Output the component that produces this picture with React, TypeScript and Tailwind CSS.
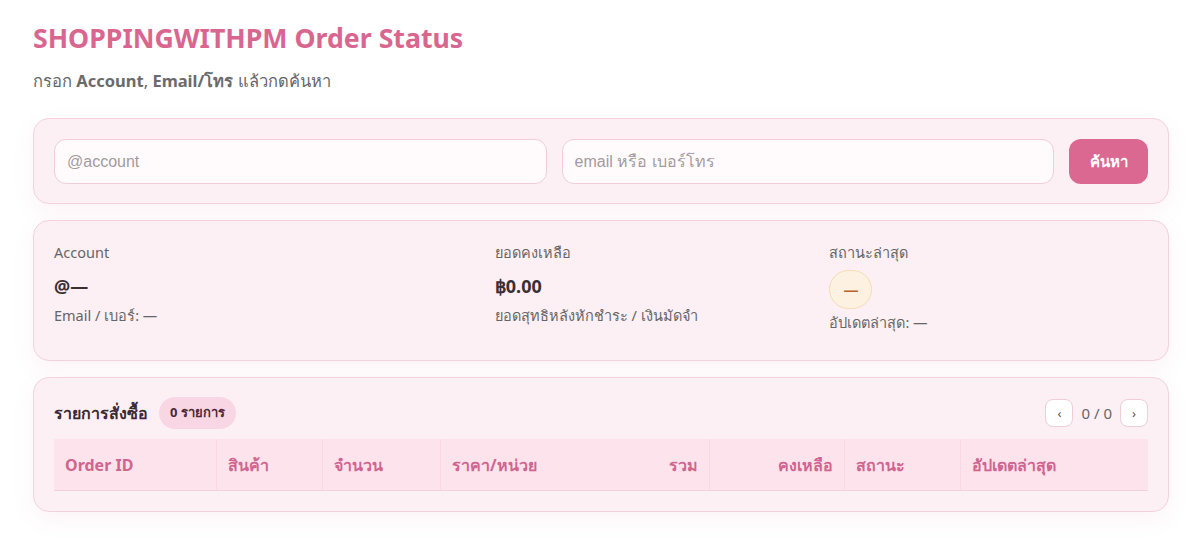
const COLUMNS = [
  { label: 'Order ID', width: 'w-[163px]', align: 'justify-start', divider: true },
  { label: 'สินค้า', width: 'w-[106px]', align: 'justify-start', divider: true },
  { label: 'จำนวน', width: 'w-[118px]', align: 'justify-start', divider: true },
  { label: 'ราคา/หน่วย', width: 'w-[135px]', align: 'justify-start', divider: false },
  { label: 'รวม', width: 'w-[134px]', align: 'justify-end', divider: true },
  { label: 'คงเหลือ', width: 'w-[135px]', align: 'justify-end', divider: true },
  { label: 'สถานะ', width: 'w-[116px]', align: 'justify-start', divider: true },
  { label: 'อัปเดตล่าสุด', width: 'flex-1', align: 'justify-start', divider: false },
]

const card =
  'bg-[#fcf0f4] border border-[#f4d2dd] rounded-2xl shadow-[0_8px_22px_rgba(219,102,143,0.08)]'

export default function App() {
  return (
    <div className="min-h-screen bg-white pl-[33px] pr-[31px] pt-[20px] font-['Noto_Sans','Open_Sans',sans-serif]">
      <h1 className="text-[26.7px] leading-[36px] font-bold text-[#d9668f]">SHOPPINGWITHPM Order Status</h1>
      <p className="mt-[14px] text-[16.5px] leading-[22px] text-[#666]">
        กรอก <b className="text-[#6b6b6b]">Account</b>, <b className="text-[#6b6b6b]">Email/โทร</b> แล้วกดค้นหา
      </p>

      <div className={`${card} mt-[26px] px-5 pt-5 pb-[19px] flex gap-[15px]`}>
        <input
          placeholder="@account"
          className="flex-1 min-w-0 h-[45px] rounded-xl border border-[#f1cdd8] bg-[#fffbfc] px-3 text-[16px] font-['Liberation_Sans',sans-serif] placeholder:text-[#a39a9e] outline-none"
        />
        <input
          placeholder="email หรือ เบอร์โทร"
          className="flex-1 min-w-0 h-[45px] rounded-xl border border-[#f1cdd8] bg-[#fffbfc] px-3 text-[16px] font-['Liberation_Sans',sans-serif] placeholder:text-[#a39a9e] outline-none"
        />
        <button className="w-[79px] h-[45px] rounded-xl bg-[#db6890] text-white text-[15px] font-bold">ค้นหา</button>
      </div>

      <div className={`${card} mt-4 px-5 pt-[21px] pb-[28px] grid grid-cols-[4fr_3fr_3fr] gap-4`}>
        <div>
          <div className="text-[14.5px] leading-5 text-[#666]">Account</div>
          <div className="mt-[11px] text-[18px] leading-[26px] font-bold text-[#3b2f33]">@—</div>
          <div className="mt-[6px] text-[14.5px] leading-5 text-[#666]">Email / เบอร์: —</div>
        </div>
        <div>
          <div className="text-[14.5px] leading-5 text-[#666]">ยอดคงเหลือ</div>
          <div className="mt-[11px] text-[18px] leading-[26px] font-bold text-[#3b2f33]">฿0.00</div>
          <div className="mt-[6px] text-[14.5px] leading-5 text-[#666]">ยอดสุทธิหลังหักชำระ / เงินมัดจำ</div>
        </div>
        <div>
          <div className="text-[14.5px] leading-5 text-[#666]">สถานะล่าสุด</div>
          <div className="mt-2 w-[43px] h-[39px] rounded-full bg-[#fdf1e1] border border-[#f6dcb6] flex items-center justify-center text-[#b8612a] text-[15px] font-bold">
            —
          </div>
          <div className="mt-[3px] text-[14.5px] leading-5 text-[#666]">อัปเดตล่าสุด: —</div>
        </div>
      </div>

      <div className={`${card} mt-4 px-5 pt-[19px] pb-5`}>
        <div className="flex items-center justify-between h-[32px]">
          <div className="flex items-center gap-[11px]">
            <span className="text-[16px] font-bold text-[#3b2a31]">รายการสั่งซื้อ</span>
            <span className="h-[32px] px-[11px] rounded-full bg-[#f9d6e3] flex items-center text-[13px] font-bold text-[#4a2a37]">
              0 รายการ
            </span>
          </div>
          <div className="flex items-center gap-2">
            <button className="w-[28px] h-[28px] rounded-lg bg-white border border-[#f0cdd8] flex items-center justify-center text-[#555] text-[13px] leading-none">
              ‹
            </button>
            <span className="text-[15px] text-[#666]">0 / 0</span>
            <button className="w-[28px] h-[28px] rounded-lg bg-white border border-[#f0cdd8] flex items-center justify-center text-[#555] text-[13px] leading-none">
              ›
            </button>
          </div>
        </div>

        <div className="mt-[10px] flex bg-[#fce3ec] border-b border-[#f4d0dc]">
          {COLUMNS.map((c) => (
            <div
              key={c.label}
              className={`${c.width} ${c.align} shrink-0 h-[51px] px-[11px] flex items-center text-[16px] font-bold text-[#d06590] ${
                c.divider ? 'border-r border-[#fad9e4]' : ''
              }`}
            >
              {c.label}
            </div>
          ))}
        </div>
      </div>
    </div>
  )
}
